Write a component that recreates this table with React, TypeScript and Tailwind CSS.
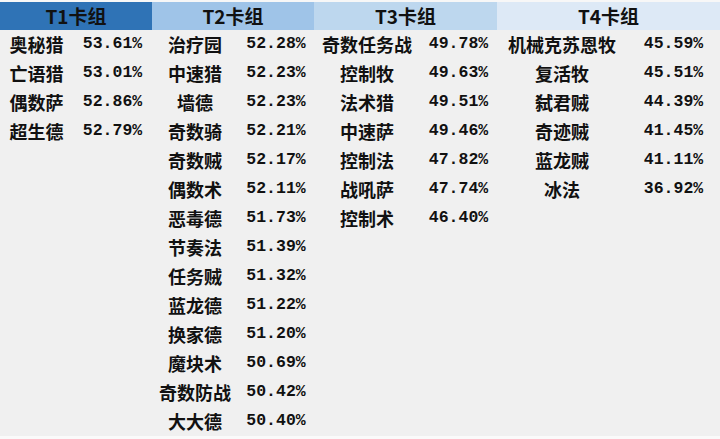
const groups = [
  {
    title: 'T1卡组',
    head: 'bg-[#2f73b6]',
    nameW: 'w-[73px]',
    pctW: 'w-[79px]',
    rows: [
      ['奥秘猎', '53.61%'],
      ['亡语猎', '53.01%'],
      ['偶数萨', '52.86%'],
      ['超生德', '52.79%'],
    ],
  },
  {
    title: 'T2卡组',
    head: 'bg-[#9fc4e8]',
    nameW: 'w-[86px]',
    pctW: 'w-[76px]',
    rows: [
      ['治疗园', '52.28%'],
      ['中速猎', '52.23%'],
      ['墙德', '52.23%'],
      ['奇数骑', '52.21%'],
      ['奇数贼', '52.17%'],
      ['偶数术', '52.11%'],
      ['恶毒德', '51.73%'],
      ['节奏法', '51.39%'],
      ['任务贼', '51.32%'],
      ['蓝龙德', '51.22%'],
      ['换家德', '51.20%'],
      ['魔块术', '50.69%'],
      ['奇数防战', '50.42%'],
      ['大大德', '50.40%'],
    ],
  },
  {
    title: 'T3卡组',
    head: 'bg-[#bdd7ee]',
    nameW: 'w-[106px]',
    pctW: 'w-[77px]',
    rows: [
      ['奇数任务战', '49.78%'],
      ['控制牧', '49.63%'],
      ['法术猎', '49.51%'],
      ['中速萨', '49.46%'],
      ['控制法', '47.82%'],
      ['战吼萨', '47.74%'],
      ['控制术', '46.40%'],
    ],
  },
  {
    title: 'T4卡组',
    head: 'bg-[#dde9f6]',
    nameW: 'w-[130px]',
    pctW: 'w-[93px]',
    rows: [
      ['机械克苏恩牧', '45.59%'],
      ['复活牧', '45.51%'],
      ['弑君贼', '44.39%'],
      ['奇迹贼', '41.45%'],
      ['蓝龙贼', '41.11%'],
      ['冰法', '36.92%'],
    ],
  },
];

const cjk = { fontFamily: '"Noto Sans CJK SC", sans-serif' };
const mono = { fontFamily: '"Liberation Mono", monospace' };

export default function App() {
  return (
    <div className="flex h-[439px] w-[720px] flex-col bg-[#f0f0f0] text-[#111]">
      <div className="h-[2px] bg-[#f7f7f7]" />
      <div className="flex flex-1">
        {groups.map((g) => (
          <Column key={g.title} group={g} />
        ))}
      </div>
      <div className="h-[3px] bg-[#fafafa]" />
    </div>
  );
}

function Column({ group }: { group: (typeof groups)[number] }) {
  return (
    <div className="flex flex-col">
      <div className={`flex h-[28px] items-center justify-center text-[19px] font-bold ${group.head}`} style={cjk}>
        {group.title}
      </div>
      {group.rows.map(([name, pct]) => (
        <div key={name} className="flex h-[29px] items-center">
          <div className={`${group.nameW} text-center text-[18px] font-bold`} style={cjk}>
            {name}
          </div>
          <div className={`${group.pctW} text-center text-[16.5px] font-bold`} style={mono}>
            {pct}
          </div>
        </div>
      ))}
    </div>
  );
}
